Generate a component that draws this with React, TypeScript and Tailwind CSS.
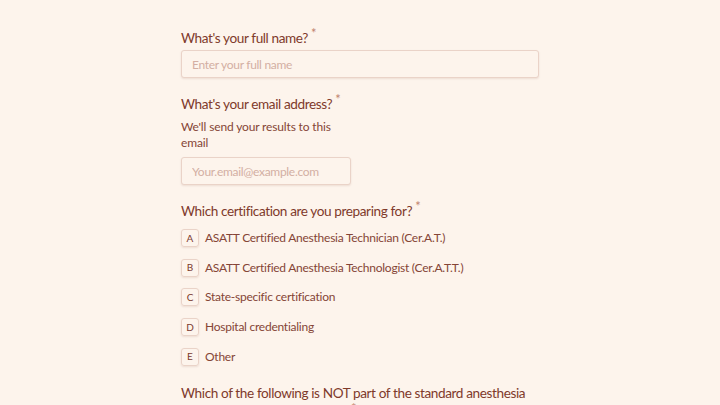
const options = [
  { key: "A", label: "ASATT Certified Anesthesia Technician (Cer.A.T.)" },
  { key: "B", label: "ASATT Certified Anesthesia Technologist (Cer.A.T.T.)" },
  { key: "C", label: "State-specific certification" },
  { key: "D", label: "Hospital credentialing" },
  { key: "E", label: "Other" },
];

function Label({ children }: { children: React.ReactNode }) {
  return (
    <div className="text-[13.6px] leading-[20px] tracking-[-0.4px] text-[#7f3a2b]">
      {children}
      <span className="relative -top-[5px] ml-[3px] text-[13px] text-[#c0826f]">*</span>
    </div>
  );
}

const inputCls =
  "h-[28px] rounded-[3px] border border-[#ead3c8] bg-[#fdf4ec] px-[10px] text-[12px] tracking-[-0.3px] text-[#7b3a2c] shadow-[0_1px_2px_rgba(120,60,40,0.12)] outline-none placeholder:text-[#d3afa3]";

export default function App() {
  return (
    <div
      className="h-[405px] w-full overflow-hidden bg-[#fdf4ec]"
      style={{ fontFamily: "Lato, 'Noto Sans', sans-serif" }}
    >
      <div className="mx-auto flex w-[358px] flex-col pt-[28px]">
        <Label>What's your full name?</Label>
        <input className={`mt-[2px] w-full ${inputCls}`} placeholder="Enter your full name" />

        <div className="mt-[16px]">
          <Label>What's your email address?</Label>
        </div>
        <p className="mt-[5px] w-[170px] text-[12px] leading-[16px] tracking-[-0.15px] text-[#854536]">
          We'll send your results to this email
        </p>
        <input className={`mt-[6px] w-[170px] ${inputCls}`} placeholder="Your.email@example.com" />

        <div className="mt-[16px]">
          <Label>Which certification are you preparing for?</Label>
        </div>
        <div className="mt-[8px] flex flex-col gap-[11.7px]">
          {options.map((o) => (
            <div key={o.key} className="flex items-center gap-[6px]">
              <div className="flex h-[18px] w-[18px] items-center justify-center rounded-[3px] border border-[#ead3c8] text-[10px] text-[#7b3a2c] shadow-[0_1px_2px_rgba(120,60,40,0.12)]">
                {o.key}
              </div>
              <span className="text-[12px] leading-[18px] tracking-[-0.25px] text-[#854536]">{o.label}</span>
            </div>
          ))}
        </div>

        <div className="mt-[17px]">
          <Label>Which of the following is NOT part of the standard anesthesia machine checkout procedure?</Label>
        </div>
      </div>
    </div>
  );
}
